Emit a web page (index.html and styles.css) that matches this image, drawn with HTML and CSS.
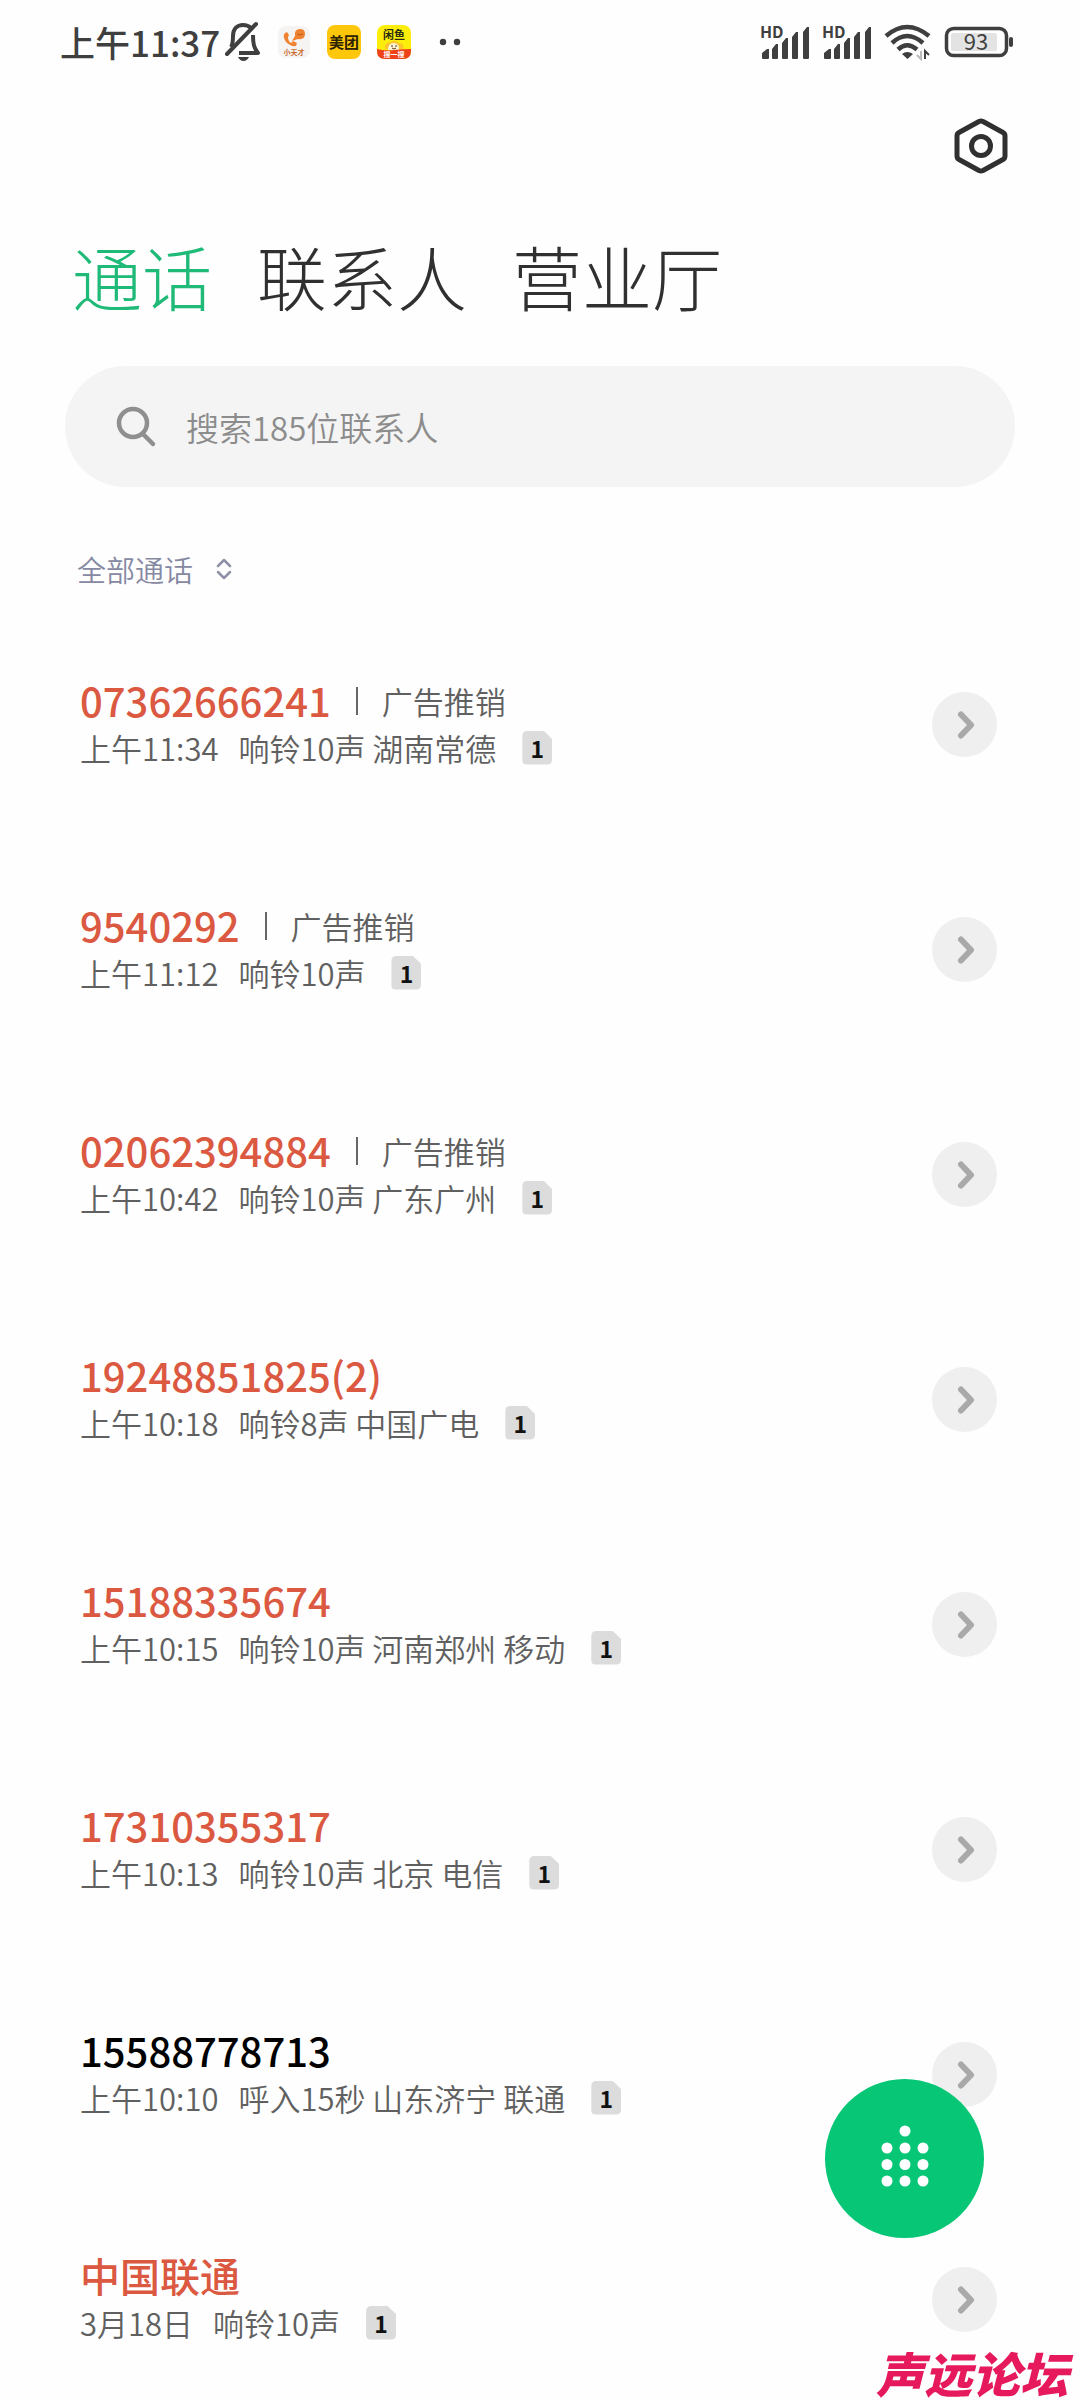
FILE: index.html
```html
<!DOCTYPE html>
<html lang="zh-CN">
	<head>
		<meta charset="utf-8">
		<meta name="viewport" content="width=device-width">
		<title>通话</title>
		<link rel="stylesheet" href="styles.css">
	</head>
	<body>
		<!-- 公用图标 -->
		<svg class="defs" width="0" height="0">
			<symbol id="arrow" viewBox="0 0 65 65">
				<path d="M29 22.500L39 33L29 43.500" fill="none" stroke="#a9a9a9" stroke-width="6" stroke-linecap="round" stroke-linejoin="round"/>
			</symbol>
			<symbol id="signal" viewBox="0 0 50 36">
				<path d="M2 32v-3l5-4h2v9q0 1-1 1H3q-1 0-1-1zM13 35q-1 0-1-1V25l4-5h2v14q0 1-1 1zM23 35q-1 0-1-1V19l4-5h2v20q0 1-1 1zM33 35q-1 0-1-1V13l4-5h2v26q0 1-1 1zM44 35q-1 0-1-1V8l4-5h2v31q0 1-1 1z"/>
			</symbol>
		</svg>

		<!-- 状态栏 -->
		<header class="status">
			<div class="statusLeft">
				<span class="time">上午11:37</span>
				<svg class="bell" width="36" height="40" viewBox="0 0 36 40">
					<path d="M6 25C8 22 8 19 8 14C8 7 12 3 18 3C21 3 24 4 26 6M28 13C28 22 29 26 33 31H14" fill="none" stroke="#3f3f3f" stroke-width="4" stroke-linejoin="round"/>
					<path d="M2 32L31 2" stroke="#3f3f3f" stroke-width="4" stroke-linecap="round"/>
					<path d="M13 35h11q-2 4-5.500 4T13 35z" fill="#3f3f3f"/>
				</svg>
				<svg class="app" width="34" height="34" viewBox="0 0 34 34">
					<rect x="1" y="1" width="32" height="32" rx="8" fill="#f6f4f3"/>
					<path d="M8 8Q5 11 9 17Q14 22 19 21L20 18L16 16L14 18Q11 16 11 12L12 10L10 7z" fill="#ef8332"/>
					<path d="M15 16L18 11Q17 4 23 4Q28 4 28 9Q28 15 21 14z" fill="#ef8332"/>
					<path d="M20 9q2 2 6 0" fill="none" stroke="#b45a1c" stroke-width="1"/>
					<text x="17" y="30" font-size="7" font-weight="700" text-anchor="middle" fill="#c86a2c" class="svgText">小天才</text>
				</svg>
				<svg class="app" width="34" height="34" viewBox="0 0 34 34">
					<rect width="34" height="34" rx="8" fill="#ffc70c"/>
					<text x="17" y="23" font-size="15" font-weight="700" text-anchor="middle" fill="#2b2200" class="svgText">美团</text>
				</svg>
				<svg class="app" width="34" height="34" viewBox="0 0 34 34">
					<rect width="34" height="34" rx="8" fill="#fcee0a"/>
					<path d="M8 24Q7 17 14 17Q18 14 22 18Q28 18 26 25z" fill="#ffc52b"/>
					<path d="M11 25Q11 18 17 18Q23 19 22 25z" fill="#fff6d8"/>
					<path d="M15 20v2M19 20v2M15 23q2 2 4 0" fill="none" stroke="#5b3a12" stroke-width="1"/>
					<path d="M0 24Q8 26 17 25T34 24V26Q34 34 26 34H8Q0 34 0 26z" fill="#ee4318"/>
					<text x="17" y="14" font-size="11" font-weight="700" text-anchor="middle" fill="#2b2b10" class="svgText">闲鱼</text>
					<text x="17" y="32" font-size="7" font-weight="700" text-anchor="middle" fill="#fff" class="svgText">搜一搜</text>
				</svg>
				<svg class="more" width="22" height="8" viewBox="0 0 22 8">
					<circle cx="4" cy="4" r="3.200"/>
					<circle cx="18" cy="4" r="3.200"/>
				</svg>
			</div>
			<div class="statusRight">
				<svg width="50" height="36" viewBox="0 0 50 36">
					<use href="#signal" width="50" height="36"/>
					<text x="0" y="14" font-size="16" font-weight="700" class="svgText">HD</text>
				</svg>
				<svg width="50" height="36" viewBox="0 0 50 36">
					<use href="#signal" width="50" height="36"/>
					<text x="0" y="14" font-size="16" font-weight="700" class="svgText">HD</text>
				</svg>
				<svg width="48" height="36" viewBox="0 0 48 36">
					<g fill="none" stroke="#3f3f3f" stroke-width="4.500">
						<path d="M2 12Q23-6 45 12"/>
						<path d="M8 19Q23 5 39 19"/>
						<path d="M14 25.500Q23 17 33 25.500"/>
					</g>
					<path d="M18 30Q23 26 29 30L23.500 35z"/>
					<path d="M37 27v8l-4-4" fill="none" stroke="#bbb" stroke-width="2"/>
					<path d="M41 35v-8l4 4" fill="none" stroke="#3f3f3f" stroke-width="2"/>
				</svg>
				<svg width="70" height="36" viewBox="0 0 70 36">
					<rect x="2.500" y="4.500" width="60" height="27" rx="7" fill="none" stroke="#3f3f3f" stroke-width="3.500"/>
					<rect x="7" y="9" width="46" height="18" rx="2" fill="#e3e3e3"/>
					<rect x="65" y="13" width="4" height="10" rx="2"/>
					<text x="32" y="26" font-size="22" font-weight="400" text-anchor="middle" class="svgText">93</text>
				</svg>
			</div>
		</header>

		<!-- 设置按钮 -->
		<div class="toolbar">
			<button class="setting" type="button" aria-label="设置">
				<svg width="56" height="60" viewBox="0 0 56 60">
					<path d="M26 5.500Q28 4.500 30 5.500L50 16.500Q52 17.500 52 20V40Q52 42.500 50 43.500L30 54.500Q28 55.500 26 54.500L6 43.500Q4 42.500 4 40V20Q4 17.500 6 16.500z" fill="none" stroke="#303030" stroke-width="5" stroke-linejoin="round"/>
					<circle cx="28" cy="30" r="9.500" fill="none" stroke="#303030" stroke-width="5"/>
				</svg>
			</button>
		</div>

		<!-- 导航 -->
		<nav class="tabs">
			<a class="active" href="#">通话</a>
			<a href="#">联系人</a>
			<a href="#">营业厅</a>
		</nav>

		<!-- 搜索框 -->
		<label class="search">
			<svg width="42" height="42" viewBox="0 0 42 42">
				<circle cx="18" cy="17" r="14" fill="none" stroke="#8f8f8f" stroke-width="4.500"/>
				<path d="M28 28L38 38" stroke="#8f8f8f" stroke-width="4.500" stroke-linecap="round"/>
			</svg>
			<input type="text" placeholder="搜索185位联系人" aria-label="搜索联系人">
		</label>

		<!-- 通话筛选 -->
		<label class="filter">
			<select aria-label="通话筛选">
				<option>全部通话</option>
			</select>
			<svg width="16" height="22" viewBox="0 0 16 22">
				<path d="M2 8L8 2L14 8M2 14L8 20L14 14" fill="none" stroke="#8e91a8" stroke-width="2.500" stroke-linecap="round" stroke-linejoin="round"/>
			</svg>
		</label>

		<!-- 通话记录 -->
		<ul class="calls">
			<li class="call missed">
				<div class="info">
					<div class="top"><span class="number">07362666241</span><span class="tag">广告推销</span></div>
					<div class="meta"><span>上午11:34</span><span>响铃10声 湖南常德</span><i class="sim">1</i></div>
				</div>
				<button class="detail" type="button" aria-label="详情"><svg width="65" height="65"><use href="#arrow"/></svg></button>
			</li>
			<li class="call missed">
				<div class="info">
					<div class="top"><span class="number">9540292</span><span class="tag">广告推销</span></div>
					<div class="meta"><span>上午11:12</span><span>响铃10声</span><i class="sim">1</i></div>
				</div>
				<button class="detail" type="button" aria-label="详情"><svg width="65" height="65"><use href="#arrow"/></svg></button>
			</li>
			<li class="call missed">
				<div class="info">
					<div class="top"><span class="number">02062394884</span><span class="tag">广告推销</span></div>
					<div class="meta"><span>上午10:42</span><span>响铃10声 广东广州</span><i class="sim">1</i></div>
				</div>
				<button class="detail" type="button" aria-label="详情"><svg width="65" height="65"><use href="#arrow"/></svg></button>
			</li>
			<li class="call missed">
				<div class="info">
					<div class="top"><span class="number">19248851825(2)</span></div>
					<div class="meta"><span>上午10:18</span><span>响铃8声 中国广电</span><i class="sim">1</i></div>
				</div>
				<button class="detail" type="button" aria-label="详情"><svg width="65" height="65"><use href="#arrow"/></svg></button>
			</li>
			<li class="call missed">
				<div class="info">
					<div class="top"><span class="number">15188335674</span></div>
					<div class="meta"><span>上午10:15</span><span>响铃10声 河南郑州 移动</span><i class="sim">1</i></div>
				</div>
				<button class="detail" type="button" aria-label="详情"><svg width="65" height="65"><use href="#arrow"/></svg></button>
			</li>
			<li class="call missed">
				<div class="info">
					<div class="top"><span class="number">17310355317</span></div>
					<div class="meta"><span>上午10:13</span><span>响铃10声 北京 电信</span><i class="sim">1</i></div>
				</div>
				<button class="detail" type="button" aria-label="详情"><svg width="65" height="65"><use href="#arrow"/></svg></button>
			</li>
			<li class="call">
				<div class="info">
					<div class="top"><span class="number">15588778713</span></div>
					<div class="meta"><span>上午10:10</span><span>呼入15秒 山东济宁 联通</span><i class="sim">1</i></div>
				</div>
				<button class="detail" type="button" aria-label="详情"><svg width="65" height="65"><use href="#arrow"/></svg></button>
			</li>
			<li class="call missed">
				<div class="info">
					<div class="top"><span class="number">中国联通</span></div>
					<div class="meta"><span>3月18日</span><span>响铃10声</span><i class="sim">1</i></div>
				</div>
				<button class="detail" type="button" aria-label="详情"><svg width="65" height="65"><use href="#arrow"/></svg></button>
			</li>
		</ul>

		<!-- 拨号盘按钮 -->
		<button class="dial" type="button" aria-label="拨号盘">
			<svg width="48" height="62" viewBox="0 0 48 62" fill="#fff">
				<circle cx="24" cy="6" r="5.500"/>
				<circle cx="6" cy="23" r="5.500"/><circle cx="24" cy="23" r="5.500"/><circle cx="42" cy="23" r="5.500"/>
				<circle cx="6" cy="39.500" r="5.500"/><circle cx="24" cy="39.500" r="5.500"/><circle cx="42" cy="39.500" r="5.500"/>
				<circle cx="6" cy="56" r="5.500"/><circle cx="24" cy="56" r="5.500"/><circle cx="42" cy="56" r="5.500"/>
			</svg>
		</button>

		<div class="watermark">声远论坛</div>
	</body>
</html>
```

FILE: styles.css
```css
*{
	margin: 0;
	padding: 0;
	box-sizing: border-box;
}

body{
	background-color: #fefefe;
	color: #666;
	font-family: "Noto Sans CJK SC", sans-serif;
}

button, input, select{
	border: none;
	outline: none;
	background: none;
	font-family: inherit;
}

svg{
	display: block;
	flex-shrink: 0;
	overflow: visible;
}

.defs{
	position: absolute;
}

.svgText{
	font-family: "Noto Sans CJK SC", sans-serif;
}

/* 状态栏 */
.status{
	display: flex;
	justify-content: space-between;
	align-items: center;
	height: 84px;
	padding: 0 66px 0 60px;
	color: #3f3f3f;
	fill: #3f3f3f;
}

.statusLeft, .statusRight{
	display: flex;
	align-items: center;
}

.statusRight{
	gap: 12px;
}

.time{
	font-size: 35px;
	line-height: 48px;
	font-weight: 500;
}

.bell{
	margin-left: 5px;
}

.app{
	margin-left: 16px;
}

.more{
	margin-left: 28px;
}

/* 设置按钮 */
.toolbar{
	display: flex;
	justify-content: flex-end;
	padding: 32px 71px 0;
}

.setting{
	width: 56px;
	height: 60px;
}

/* 导航 */
.tabs{
	display: flex;
	gap: 45px;
	padding: 48px 72px 0;
	font-size: 70px;
	line-height: 104px;
	font-weight: 300;
}

.tabs a{
	color: #303030;
	text-decoration: none;
}

.tabs .active{
	color: #1fba78;
}

/* 搜索框 */
.search{
	display: flex;
	align-items: center;
	gap: 29px;
	height: 121px;
	margin: 38px 65px 0;
	padding: 0 50px;
	border-radius: 61px;
	background-color: #f4f4f4;
}

.search input{
	flex: 1;
	min-width: 0;
	font-size: 33px;
	line-height: 48px;
	font-weight: 350;
	color: #333;
}

.search input::placeholder{
	color: #8c8c8c;
	opacity: 1;
}

/* 通话筛选 */
.filter{
	display: flex;
	align-items: center;
	gap: 22px;
	margin: 60px 77px 0;
}

.filter select{
	appearance: none;
	font-size: 29px;
	line-height: 44px;
	font-weight: 350;
	color: #8689a2;
}

/* 通话记录 */
.calls{
	list-style: none;
	display: flex;
	flex-direction: column;
	gap: 131px;
	padding: 86px 83px 0 80px;
}

.call{
	display: flex;
	justify-content: space-between;
	align-items: center;
}

.top, .meta{
	display: flex;
	align-items: center;
	line-height: 47px;
	white-space: pre;
}

.number{
	font-size: 40px;
	font-weight: 500;
	color: #000;
}

.missed .number{
	color: #db5841;
}

.tag{
	display: flex;
	align-items: center;
	gap: 24px;
	margin-left: 25px;
	font-size: 31px;
}

/* 竖线 */
.tag::before{
	content: "";
	width: 2px;
	height: 28px;
	background-color: #666;
}

.meta{
	gap: 20px;
	font-size: 31px;
}

.tag, .meta{
	font-weight: 350;
	color: #606060;
}

/* 卡槽 */
.sim{
	width: 30px;
	height: 34px;
	margin-left: 6px;
	border-radius: 5px;
	background-color: #dcdcdc;
	clip-path: polygon(0 0, 70% 0, 100% 26%, 100% 100%, 0 100%);
	font-size: 23px;
	line-height: 34px;
	font-style: normal;
	font-weight: 700;
	text-align: center;
	color: #111;
}

.detail{
	width: 65px;
	height: 65px;
	border-radius: 50%;
	background-color: #efefef;
}

/* 拨号盘按钮 */
.dial{
	display: flex;
	justify-content: center;
	align-items: center;
	position: fixed;
	right: 96px;
	bottom: 162px;
	width: 159px;
	height: 159px;
	padding-bottom: 6px;
	border-radius: 50%;
	background-color: #07c675;
}

/* 水印 */
.watermark{
	position: fixed;
	right: 12px;
	bottom: 2px;
	font-size: 48px;
	line-height: 52px;
	font-style: italic;
	font-weight: 900;
	color: #e5195b;
}
```
